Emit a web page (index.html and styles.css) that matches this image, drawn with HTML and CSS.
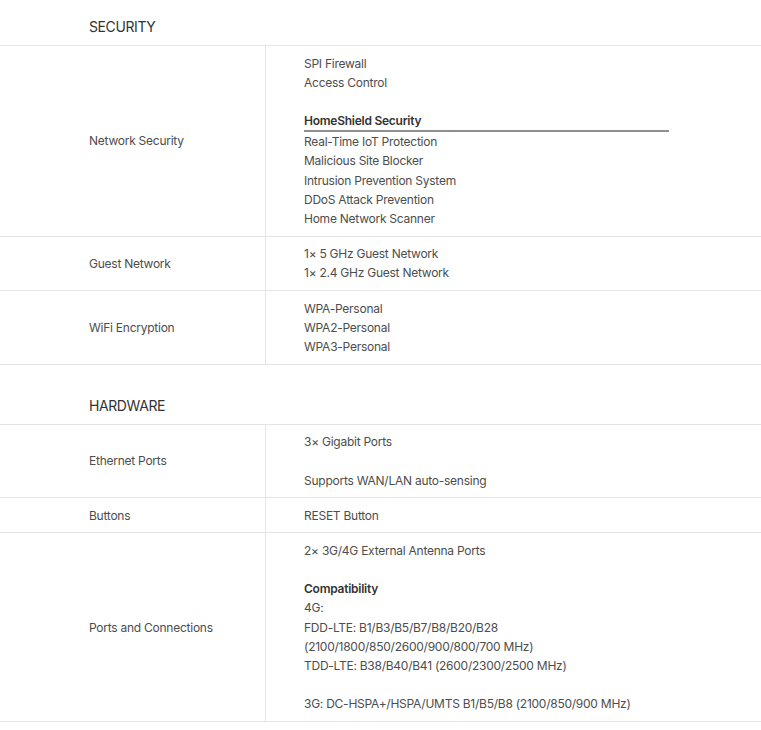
FILE: index.html
```html
<!DOCTYPE html>
<html lang="en">
<head>
<meta charset="utf-8">
<title>Specifications</title>
<link rel="stylesheet" href="styles.css">
</head>
<body>
<div class="specs">
  <section class="spec-group">
    <h2 class="group-title">SECURITY</h2>
    <div class="spec-row">
      <div class="spec-label">Network Security</div>
      <div class="spec-value">
        <p>SPI Firewall</p>
        <p>Access Control</p>
        <p class="blank">&nbsp;</p>
        <p class="sub-title underlined">HomeShield Security</p>
        <p>Real-Time IoT Protection</p>
        <p>Malicious Site Blocker</p>
        <p>Intrusion Prevention System</p>
        <p>DDoS Attack Prevention</p>
        <p>Home Network Scanner</p>
      </div>
    </div>
    <div class="spec-row">
      <div class="spec-label">Guest Network</div>
      <div class="spec-value">
        <p>1× 5 GHz Guest Network</p>
        <p>1× 2.4 GHz Guest Network</p>
      </div>
    </div>
    <div class="spec-row">
      <div class="spec-label">WiFi Encryption</div>
      <div class="spec-value">
        <p>WPA-Personal</p>
        <p>WPA2-Personal</p>
        <p>WPA3-Personal</p>
      </div>
    </div>
  </section>
  <section class="spec-group">
    <h2 class="group-title">HARDWARE</h2>
    <div class="spec-row">
      <div class="spec-label">Ethernet Ports</div>
      <div class="spec-value">
        <p>3× Gigabit Ports</p>
        <p class="blank">&nbsp;</p>
        <p>Supports WAN/LAN auto-sensing</p>
      </div>
    </div>
    <div class="spec-row">
      <div class="spec-label">Buttons</div>
      <div class="spec-value">
        <p>RESET Button</p>
      </div>
    </div>
    <div class="spec-row">
      <div class="spec-label">Ports and Connections</div>
      <div class="spec-value">
        <p>2× 3G/4G External Antenna Ports</p>
        <p class="blank">&nbsp;</p>
        <p class="sub-title">Compatibility</p>
        <p>4G:</p>
        <p>FDD-LTE: B1/B3/B5/B7/B8/B20/B28</p>
        <p>(2100/1800/850/2600/900/800/700 MHz)</p>
        <p>TDD-LTE: B38/B40/B41 (2600/2300/2500 MHz)</p>
        <p class="blank">&nbsp;</p>
        <p>3G: DC-HSPA+/HSPA/UMTS B1/B5/B8 (2100/850/900 MHz)</p>
      </div>
    </div>
  </section>
</div>
</body>
</html>
```

FILE: styles.css
```css
html, body {
  margin: 0;
  padding: 0;
  background: #ffffff;
}

body {
  font-family: Inter, "Liberation Sans", Arial, sans-serif;
  color: #4d4d4d;
  font-size: 12px;
  line-height: 1.6;
  letter-spacing: -0.25px;
}

.specs {
  width: 761px;
}

.spec-group + .spec-group {
  margin-top: 14px;
}

.group-title {
  margin: 0;
  box-sizing: content-box;
  height: 28px;
  padding: 17px 0 0 89px;
  font-size: 14px;
  line-height: 20px;
  font-weight: 400;
  letter-spacing: -0.4px;
  color: #333333;
  border-bottom: 1px solid #e5e5e5;
}

.spec-row {
  display: flex;
  border-bottom: 1px solid #e5e5e5;
}

.spec-label {
  width: 266px;
  box-sizing: border-box;
  flex: none;
  display: flex;
  align-items: center;
  padding-left: 89px;
  border-right: 1px solid #e5e5e5;
}

.spec-value {
  flex: 1;
  padding: 7.5px 0 7.5px 38px;
}

.spec-value p {
  margin: 0;
}

.sub-title {
  font-weight: 600;
  color: #333333;
}

.underlined {
  width: 365px;
  border-bottom: 2px solid #8f8f8f;
}
```
